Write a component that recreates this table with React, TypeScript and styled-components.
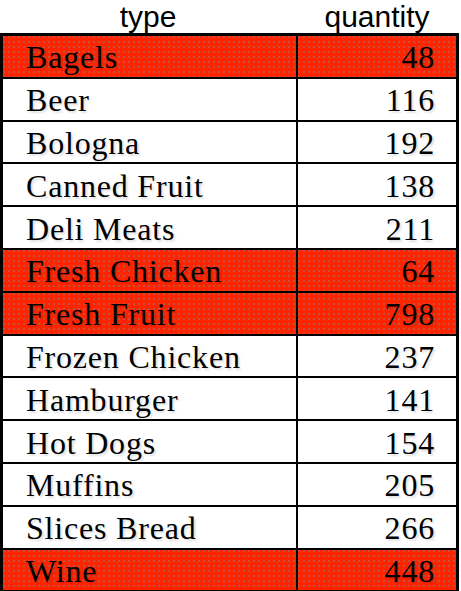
import React from "react";
import styled, { createGlobalStyle } from "styled-components";

const GlobalStyle = createGlobalStyle`
  html, body { margin: 0; padding: 0; background: #ffffff; }
  body { width: 461px; height: 591px; overflow: hidden; }
`;

const Wrapper = styled.div`
  width: 461px;
  display: flex;
  flex-direction: column;
`;

const HeaderRow = styled.div`
  display: grid;
  grid-template-columns: 296px 162px;
  height: 33px;
  font-family: "Liberation Sans", Arial, sans-serif;
  font-size: 30px;
  line-height: 33px;
  color: #000;
`;

const HeaderCell = styled.div`
  text-align: center;
`;

const Table = styled.div`
  width: 453px;
  border: 3px solid #000;
  border-bottom-width: 2px;
  display: grid;
  grid-template-columns: 293px 160px;
  row-gap: 2px;
  background: #000;
`;

const Row = styled.div`
  display: contents;
`;

const Cell = styled.div<{ $hl: boolean; $num?: boolean }>`
  height: 40.8px;
  box-sizing: border-box;
  display: flex;
  align-items: center;
  justify-content: ${(p) => (p.$num ? "flex-end" : "flex-start")};
  padding: ${(p) => (p.$num ? "3px 21px 0 0" : "3px 0 0 23px")};
  margin-left: ${(p) => (p.$num ? "2px" : "0")};
  font-family: "Liberation Serif", "Times New Roman", serif;
  font-size: 32px;
  letter-spacing: 0.8px;
  color: #000;
  text-shadow: 2px 2px 2px rgba(0, 0, 0, 0.12);
  background-color: ${(p) => (p.$hl ? "#ff2400" : "#ffffff")};
  background-image: ${(p) =>
    p.$hl
      ? "radial-gradient(circle at 1px 1px, rgba(90,160,180,0.55) 0.6px, transparent 0.9px)"
      : "none"};
  background-size: 5px 5px;
`;

const rows: [string, number, boolean][] = [
  ["Bagels", 48, true],
  ["Beer", 116, false],
  ["Bologna", 192, false],
  ["Canned Fruit", 138, false],
  ["Deli Meats", 211, false],
  ["Fresh Chicken", 64, true],
  ["Fresh Fruit", 798, true],
  ["Frozen Chicken", 237, false],
  ["Hamburger", 141, false],
  ["Hot Dogs", 154, false],
  ["Muffins", 205, false],
  ["Slices Bread", 266, false],
  ["Wine", 448, true],
];

export default function App() {
  return (
    <Wrapper>
      <GlobalStyle />
      <HeaderRow>
        <HeaderCell>type</HeaderCell>
        <HeaderCell>quantity</HeaderCell>
      </HeaderRow>
      <Table>
        {rows.map(([name, qty, hl]) => (
          <Row key={name}>
            <Cell $hl={hl}>{name}</Cell>
            <Cell $hl={hl} $num>
              {qty}
            </Cell>
          </Row>
        ))}
      </Table>
    </Wrapper>
  );
}
